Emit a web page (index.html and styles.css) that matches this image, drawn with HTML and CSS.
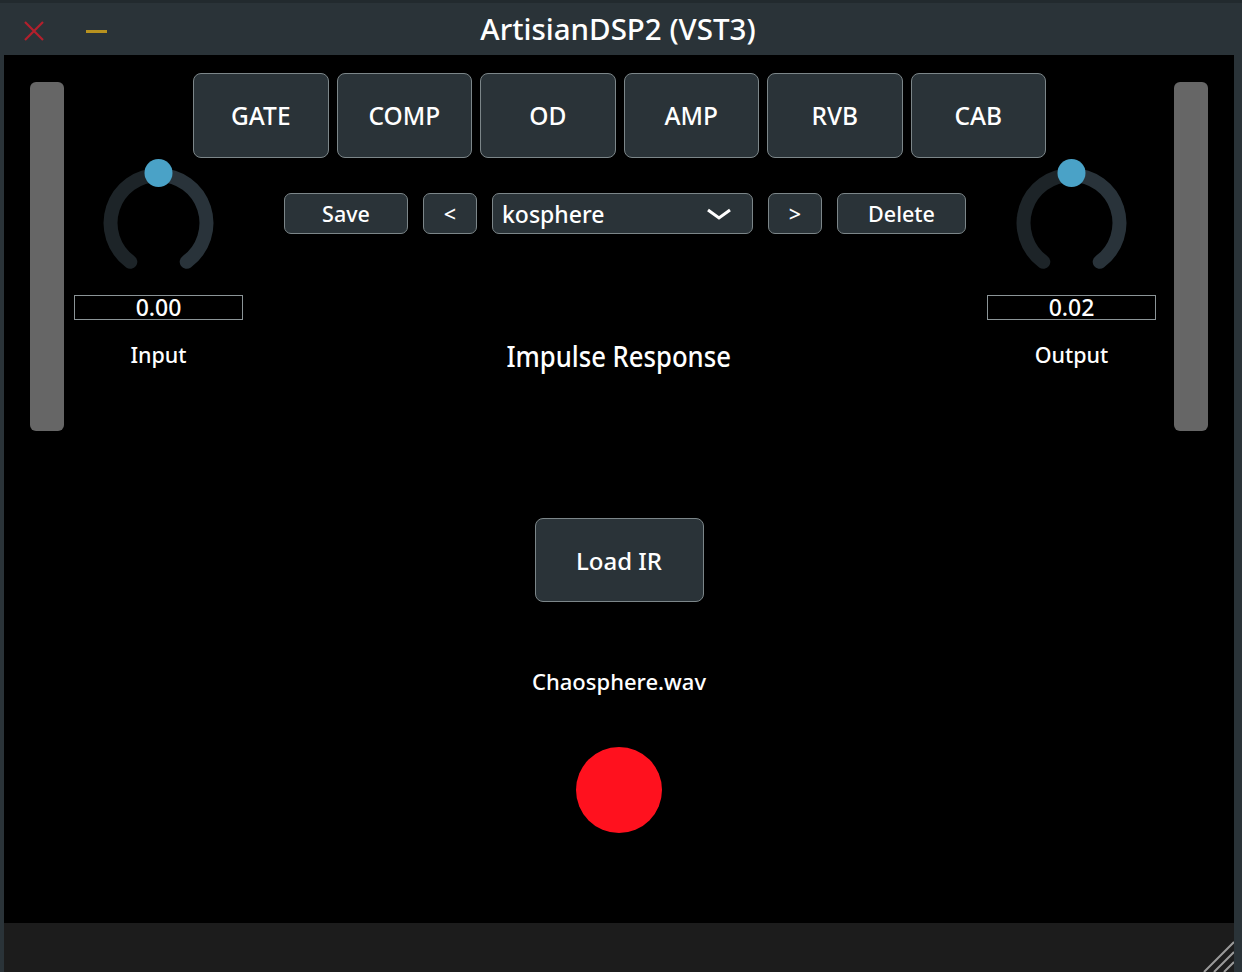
FILE: index.html
```html
<!DOCTYPE html>
<html>
<head>
<meta charset="utf-8">
<link rel="stylesheet" href="styles.css">
</head>
<body>
<div class="window">
  <div class="titlebar">
    <div class="wbtns">
      <svg class="wclose" width="22" height="22" viewBox="0 0 22 22"><path d="M2 2 L20 20 M20 2 L2 20" stroke="#b3202c" stroke-width="2.2"/></svg>
      <span class="wmin"></span>
    </div>
    <div class="title">ArtisianDSP2 (VST3)</div>
  </div>
  <div class="frame">
    <div class="content">
      <div class="main">
        <div class="meter"></div>
        <div class="middle">
          <div class="tabs">
            <div class="tab">GATE</div>
            <div class="tab">COMP</div>
            <div class="tab">OD</div>
            <div class="tab">AMP</div>
            <div class="tab">RVB</div>
            <div class="tab">CAB</div>
          </div>
          <div class="knob-row">
            <div class="knob-col left">
              <svg class="knob" width="169" height="112" viewBox="0 0 169 112">
                <path d="M 56.3 103.8 A 48 48 0 0 1 84.5 17" fill="none" stroke="#1d2428" stroke-width="14" stroke-linecap="round"/>
                <path d="M 84.5 17 A 48 48 0 0 1 112.7 103.8" fill="none" stroke="#29333a" stroke-width="14" stroke-linecap="round"/>
                <circle cx="84.5" cy="15" r="14" fill="#4aa2c7"/>
              </svg>
              <div class="valbox">0.00</div>
              <div class="klabel">Input</div>
            </div>
            <div class="center-col">
              <div class="preset-row">
                <div class="pbtn save">Save</div>
                <div class="pbtn arrow">&lt;</div>
                <div class="combo">
                  <span>kosphere</span>
                  <svg width="26" height="14" viewBox="0 0 26 14"><path d="M2 3 L13 11 L24 3" fill="none" stroke="#fff" stroke-width="3" stroke-linejoin="miter"/></svg>
                </div>
                <div class="pbtn arrow">&gt;</div>
                <div class="pbtn del">Delete</div>
              </div>
              <div class="section-title">Impulse Response</div>
            </div>
            <div class="knob-col right">
              <svg class="knob" width="169" height="112" viewBox="0 0 169 112">
                <path d="M 56.3 103.8 A 48 48 0 0 1 84.5 17" fill="none" stroke="#1d2428" stroke-width="14" stroke-linecap="round"/>
                <path d="M 84.5 17 A 48 48 0 0 1 112.7 103.8" fill="none" stroke="#29333a" stroke-width="14" stroke-linecap="round"/>
                <circle cx="84.5" cy="15" r="14" fill="#4aa2c7"/>
              </svg>
              <div class="valbox">0.02</div>
              <div class="klabel">Output</div>
            </div>
          </div>
          <div class="ir">
            <div class="loadbtn">Load IR</div>
            <div class="filename">Chaosphere.wav</div>
            <div class="led"></div>
          </div>
        </div>
        <div class="meter"></div>
      </div>
      <div class="bottombar">
        <svg class="grip" width="32" height="32" viewBox="0 0 32 32">
          <path d="M2 32 L32 2 M12 32 L32 12 M22 32 L32 22" stroke="#9a9a9a" stroke-width="2"/>
        </svg>
      </div>
    </div>
  </div>
</div>
</body>
</html>
```

FILE: styles.css
```css
* { box-sizing: border-box; }
html, body { margin: 0; padding: 0; background: #2a3338; }
body { font-family: "Noto Sans", "Open Sans", sans-serif; color: #fff; font-weight: 500; }

.window { width: 1242px; height: 972px; display: flex; flex-direction: column; background: #2a3338; }

.titlebar {
  height: 55px;
  border-top: 3px solid #222a2e;
  display: flex;
  align-items: center;
  justify-content: center;
  position: relative;
}
.wbtns { position: absolute; left: 23px; top: 17px; display: flex; align-items: center; gap: 41px; }
.wmin { display: block; width: 21px; height: 3px; background: #b8921f; }
.title { font-size: 29.5px; margin-top: -2px; margin-left: -6px; }

.frame { flex: 1; display: flex; padding: 0 8px 0 4px; }
.content { flex: 1; display: flex; flex-direction: column; background: #000; }

.main { flex: 1; display: flex; padding: 0 26px; }
.meter { width: 34px; height: 349px; margin-top: 27px; background: #666; border-radius: 6px; }

.middle { flex: 1; display: flex; flex-direction: column; }

.tabs { display: flex; justify-content: center; gap: 8px; margin-top: 18px; padding-left: 1px; }
.tab {
  width: 135.5px; height: 85px;
  background: #2a3338; border: 1.5px solid #7c8689; border-radius: 8px;
  display: flex; align-items: center; justify-content: center;
  font-size: 24.5px;
}

.knob-row { display: grid; grid-template-columns: 169px 1fr 169px; padding: 0 18px 0 10px; }
.knob-col { display: flex; flex-direction: column; align-items: center; }
.knob { display: block; }
.valbox {
  width: 169px; height: 25px; margin-top: 25px;
  border: 1.5px solid #8b9497;
  display: flex; align-items: center; justify-content: center;
  font-size: 23px; line-height: 1;
}
.klabel { margin-top: 22px; font-size: 21.5px; line-height: 26px; }

.center-col { display: flex; flex-direction: column; align-items: center; }
.preset-row { display: flex; gap: 15px; margin-top: 35px; margin-left: 20px; }
.pbtn, .combo {
  height: 41px; background: #2a3338; border: 1.5px solid #7c8689; border-radius: 7px;
  display: flex; align-items: center; justify-content: center; font-size: 21.5px;
}
.save { width: 124px; }
.arrow { width: 54px; }
.del { width: 129px; }
.combo { width: 261px; justify-content: space-between; padding: 0 20px 0 9px; font-size: 23px; }
.combo svg { display: block; margin-top: 1px; }
.section-title {
  margin-top: 104px; font-size: 28.5px; line-height: 36px; margin-left: 8px;
  transform: scaleX(0.9);
}

.ir { display: flex; flex-direction: column; align-items: center; margin-top: 144px; }
.loadbtn {
  width: 169px; height: 84px; background: #2a3338; border: 1.5px solid #7c8689; border-radius: 8px;
  display: flex; align-items: center; justify-content: center; font-size: 24px;
}
.filename { margin-top: 65px; font-size: 22px; line-height: 28px; }
.led { width: 86px; height: 86px; margin-top: 52px; border-radius: 50%; background: #ff111e; }

.bottombar { height: 49px; background: #1c1c1c; position: relative; }
.grip { position: absolute; right: 0; bottom: 0; }
```
